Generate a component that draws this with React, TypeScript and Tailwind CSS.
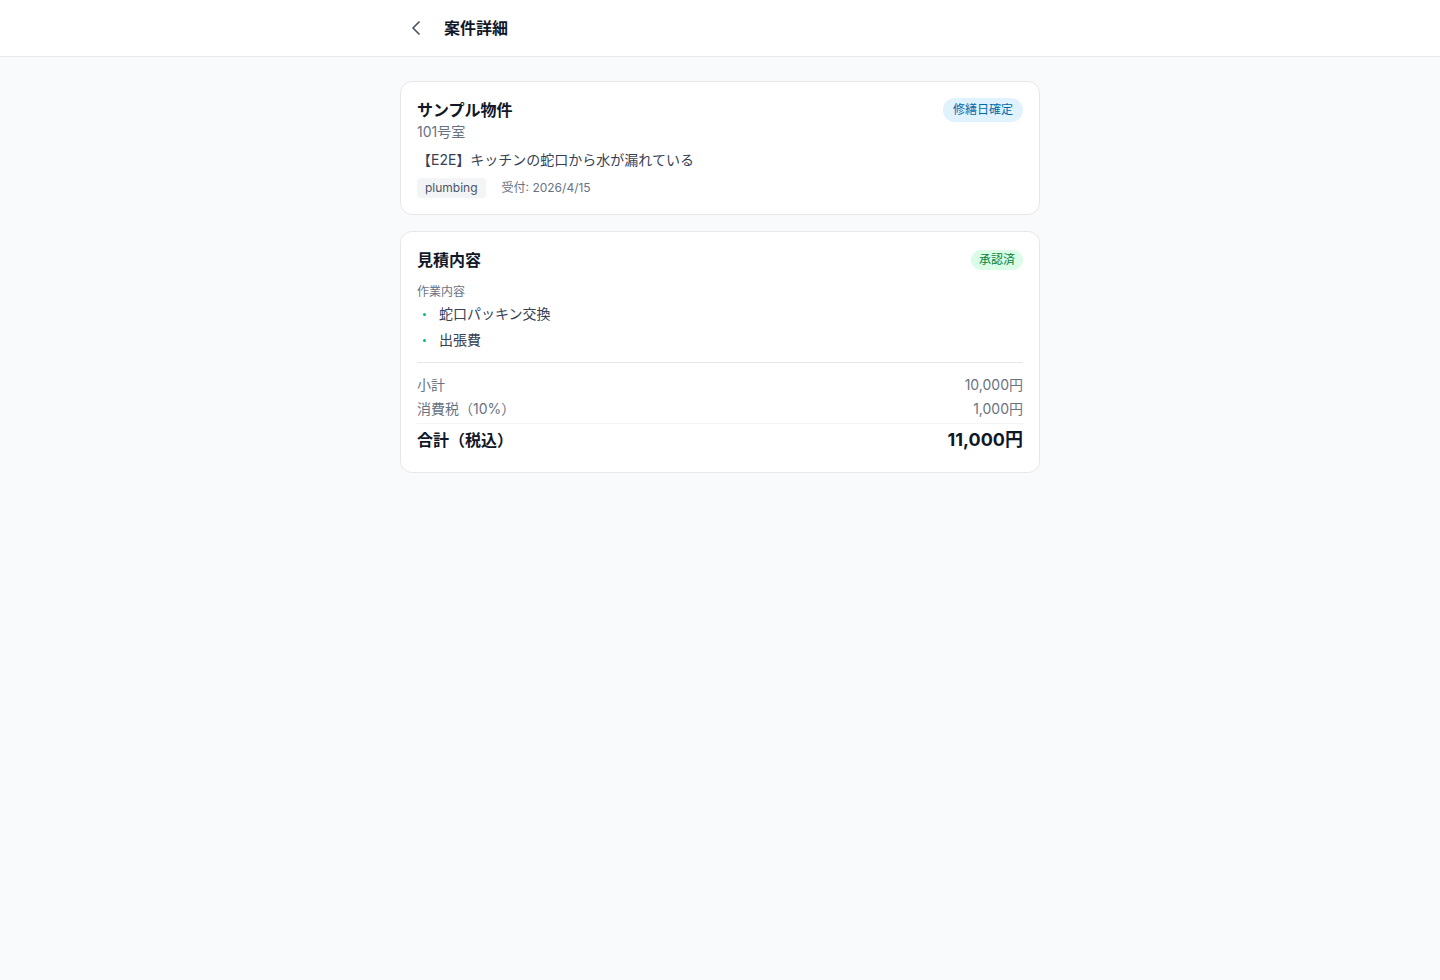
import React from "react";
import { ChevronLeft } from "lucide-react";

export default function App() {
  return (
    <div
      className="min-h-screen bg-gray-50 text-gray-900"
      style={{ fontFamily: '"Inter", "Noto Sans CJK JP", sans-serif' }}
    >
      <header className="bg-white border-b border-gray-200">
        <div className="max-w-2xl mx-auto px-4 h-14 flex items-center gap-3">
          <button className="p-1 text-gray-600">
            <ChevronLeft size={24} strokeWidth={1.75} />
          </button>
          <h1 className="text-base font-bold text-gray-900">案件詳細</h1>
        </div>
      </header>

      <main className="max-w-2xl mx-auto px-4 pt-6 flex flex-col gap-4">
        <section className="bg-white border border-gray-200 rounded-xl p-4">
          <div className="flex items-start justify-between">
            <div>
              <h2 className="text-base font-bold leading-6">サンプル物件</h2>
              <p className="text-sm text-gray-500 leading-5">101号室</p>
            </div>
            <span className="rounded-full bg-sky-100 text-sky-700 text-xs leading-4 px-2.5 py-1">
              修繕日確定
            </span>
          </div>
          <p className="mt-2 text-sm text-gray-700 leading-5">【E2E】キッチンの蛇口から水が漏れている</p>
          <div className="mt-2 flex items-center gap-4">
            <span className="bg-gray-100 text-gray-600 text-xs leading-4 px-2 py-0.5 rounded">plumbing</span>
            <span className="text-xs text-gray-500">受付: 2026/4/15</span>
          </div>
        </section>

        <section className="bg-white border border-gray-200 rounded-xl p-4">
          <div className="flex items-center justify-between">
            <h2 className="text-base font-bold leading-6">見積内容</h2>
            <span className="rounded-full bg-green-100 text-green-700 text-xs leading-4 px-2 py-0.5">承認済</span>
          </div>
          <p className="mt-3 text-xs text-gray-500 leading-4">作業内容</p>
          <ul className="mt-1 flex flex-col gap-1.5">
            {["蛇口パッキン交換", "出張費"].map((t) => (
              <li key={t} className="flex items-center text-sm text-gray-700 leading-5">
                <span className="w-[22px] pl-[6px] flex items-center">
                  <span className="block w-[3px] h-[3px] rounded-full bg-emerald-500" />
                </span>
                <span>{t}</span>
              </li>
            ))}
          </ul>
          <div className="mt-3 pt-3 border-t border-gray-200 flex flex-col gap-1">
            <div className="flex justify-between text-sm text-gray-500 leading-5">
              <span>小計</span>
              <span>10,000円</span>
            </div>
            <div className="flex justify-between text-sm text-gray-500 leading-5">
              <span>消費税（10%）</span>
              <span>1,000円</span>
            </div>
            <div className="pt-0.5 mb-0.5 border-t border-gray-100 flex justify-between items-center">
              <span className="text-base font-bold">合計（税込）</span>
              <span className="text-lg font-bold leading-7">11,000円</span>
            </div>
          </div>
        </section>
      </main>
    </div>
  );
}
